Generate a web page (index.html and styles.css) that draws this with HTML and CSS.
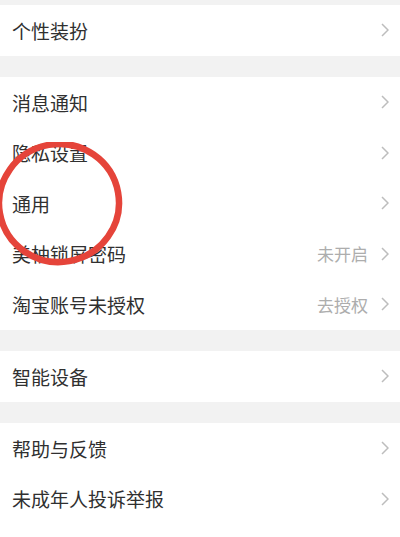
FILE: index.html
```html
<!DOCTYPE html>
<html lang="zh">
<head>
<meta charset="utf-8">
<link rel="stylesheet" href="styles.css">
</head>
<body>
<div class="page">
  <div class="gap-top"></div>
  <div class="group">
    <div class="row"><span class="label">个性装扮</span><span class="right"><svg class="chev" viewBox="0 0 8 14"><path d="M1 1 L7 7 L1 13"/></svg></span></div>
  </div>
  <div class="sep"></div>
  <div class="group">
    <div class="row"><span class="label">消息通知</span><span class="right"><svg class="chev" viewBox="0 0 8 14"><path d="M1 1 L7 7 L1 13"/></svg></span></div>
    <div class="row"><span class="label">隐私设置</span><span class="right"><svg class="chev" viewBox="0 0 8 14"><path d="M1 1 L7 7 L1 13"/></svg></span></div>
    <div class="row"><span class="label">通用</span><span class="right"><svg class="chev" viewBox="0 0 8 14"><path d="M1 1 L7 7 L1 13"/></svg></span></div>
    <div class="row"><span class="label">美柚锁屏密码</span><span class="right"><span class="value">未开启</span><svg class="chev" viewBox="0 0 8 14"><path d="M1 1 L7 7 L1 13"/></svg></span></div>
    <div class="row"><span class="label">淘宝账号未授权</span><span class="right"><span class="value">去授权</span><svg class="chev" viewBox="0 0 8 14"><path d="M1 1 L7 7 L1 13"/></svg></span></div>
  </div>
  <div class="sep"></div>
  <div class="group">
    <div class="row"><span class="label">智能设备</span><span class="right"><svg class="chev" viewBox="0 0 8 14"><path d="M1 1 L7 7 L1 13"/></svg></span></div>
  </div>
  <div class="sep"></div>
  <div class="group last">
    <div class="row"><span class="label">帮助与反馈</span><span class="right"><svg class="chev" viewBox="0 0 8 14"><path d="M1 1 L7 7 L1 13"/></svg></span></div>
    <div class="row"><span class="label">未成年人投诉举报</span><span class="right"><svg class="chev" viewBox="0 0 8 14"><path d="M1 1 L7 7 L1 13"/></svg></span></div>
  </div>
  <svg class="mark" viewBox="0 0 140 140" width="140" height="140">
    <ellipse cx="63" cy="61" rx="60" ry="59" transform="rotate(-10 63 61)"/>
  </svg>
</div>
</body>
</html>
```

FILE: styles.css
```css
html, body {
  margin: 0;
  padding: 0;
  background: #f2f2f2;
}
.page {
  position: relative;
  width: 400px;
  height: 537px;
  overflow: hidden;
  background: #f2f2f2;
  font-family: "Noto Sans CJK SC", "Noto Sans", sans-serif;
  display: flex;
  flex-direction: column;
}
.gap-top {
  height: 5px;
  flex: none;
}
.sep {
  height: 21.5px;
  flex: none;
}
.group {
  background: #ffffff;
  flex: none;
}
.group.last {
  flex: 1;
}
.row {
  height: 50.5px;
  display: flex;
  align-items: center;
  justify-content: space-between;
  padding: 0 11px 0 12px;
}
.label {
  font-size: 19px;
  color: #303030;
}
.right {
  display: flex;
  align-items: center;
  gap: 13px;
}
.value {
  font-size: 17px;
  color: #adadad;
}
.chev {
  width: 8px;
  height: 14px;
}
.chev path {
  fill: none;
  stroke: #bdbdbd;
  stroke-width: 1.5;
}
.mark {
  position: absolute;
  left: -4px;
  top: 142px;
}
.mark ellipse {
  fill: none;
  stroke: #e5443a;
  stroke-width: 6.5;
}
```
